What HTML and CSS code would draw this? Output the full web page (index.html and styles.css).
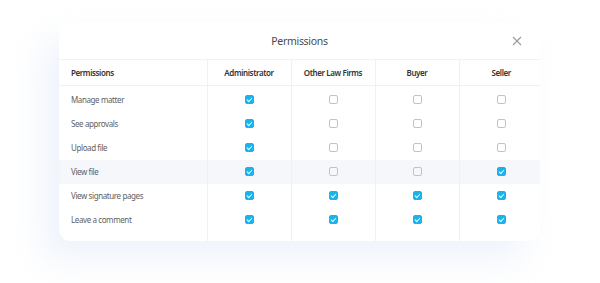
FILE: index.html
```html
<!DOCTYPE html>
<html>
<head>
<meta charset="utf-8">
<link rel="stylesheet" href="styles.css">
</head>
<body>
<div class="stage">
  <div class="card">
    <div class="titlebar">
      <span class="title">Permissions</span>
      <svg class="close" width="10" height="10" viewBox="0 0 10 10"><path d="M1 1L9 9M9 1L1 9" stroke="#9a9a9a" stroke-width="1.1" fill="none"/></svg>
    </div>
    <table class="grid">
      <colgroup><col class="c-lab"><col class="c-role"><col class="c-role"><col class="c-role"><col class="c-role"></colgroup>
      <thead>
        <tr><th class="lab">Permissions</th><th>Administrator</th><th>Other Law Firms</th><th>Buyer</th><th>Seller</th></tr>
      </thead>
      <tbody>
        <tr><td class="lab">Manage matter</td><td><i class="cb on"></i></td><td><i class="cb"></i></td><td><i class="cb"></i></td><td><i class="cb"></i></td></tr>
        <tr><td class="lab">See approvals</td><td><i class="cb on"></i></td><td><i class="cb"></i></td><td><i class="cb"></i></td><td><i class="cb"></i></td></tr>
        <tr><td class="lab">Upload file</td><td><i class="cb on"></i></td><td><i class="cb"></i></td><td><i class="cb"></i></td><td><i class="cb"></i></td></tr>
        <tr class="hl"><td class="lab">View file</td><td><i class="cb on"></i></td><td><i class="cb"></i></td><td><i class="cb"></i></td><td><i class="cb on"></i></td></tr>
        <tr><td class="lab">View signature pages</td><td><i class="cb on"></i></td><td><i class="cb on"></i></td><td><i class="cb on"></i></td><td><i class="cb on"></i></td></tr>
        <tr><td class="lab">Leave a comment</td><td><i class="cb on"></i></td><td><i class="cb on"></i></td><td><i class="cb on"></i></td><td><i class="cb on"></i></td></tr>
      </tbody>
    </table>
  </div>
</div>
</body>
</html>
```
FILE: styles.css
```css
html, body {
  margin: 0;
  padding: 0;
  background: #ffffff;
}
body {
  width: 600px;
  height: 283px;
  overflow: hidden;
  font-family: "Noto Sans", "Open Sans", sans-serif;
}
.stage {
  padding: 22px 0 0 59px;
}
.card {
  width: 481px;
  background: #ffffff;
  border-radius: 12px;
  overflow: hidden;
  box-shadow: -16px 18px 34px rgba(214, 227, 246, 0.42);
}
.titlebar {
  height: 37px;
  display: flex;
  align-items: center;
  justify-content: center;
  position: relative;
}
.title {
  font-size: 10.5px;
  letter-spacing: -0.3px;
  color: #4a4a4a;
}
.close {
  position: absolute;
  right: 18px;
  top: 14px;
}
.grid {
  border-collapse: collapse;
  table-layout: fixed;
  width: 484px;
}
.c-lab { width: 148px; }
.c-role { width: 84px; }
.grid th, .grid td {
  padding: 0;
  text-align: center;
  vertical-align: middle;
  border-left: 1px solid #f1f1f3;
  box-sizing: border-box;
  letter-spacing: -0.4px;
}
.grid th.lab, .grid td.lab {
  border-left: none;
  text-align: left;
  padding-left: 12px;
}
.grid th {
  height: 26px;
  font-size: 8px;
  font-weight: 600;
  color: #333333;
  border-top: 1px solid #f3f3f5;
  border-bottom: 1px solid #f1f1f3;
}
.grid td {
  height: 24px;
  font-size: 8px;
  color: #616161;
}
.grid tbody tr:first-child td {
  height: 26px;
  padding-top: 2px;
}
.grid tbody tr:last-child td {
  height: 33px;
  padding-bottom: 9px;
}
.grid tr.hl td {
  background: #f6f7fb;
}
.cb {
  display: block;
  margin: 0 auto;
  width: 9px;
  height: 9px;
  box-sizing: border-box;
  border: 1px solid #c3c3c5;
  border-radius: 2px;
  position: relative;
}
.cb.on {
  background: #1bb3ec;
  border-color: #1bb3ec;
}
.cb.on::after {
  content: "";
  position: absolute;
  left: 1.5px;
  top: 1.5px;
  width: 3.5px;
  height: 2px;
  border-left: 1px solid #ffffff;
  border-bottom: 1px solid #ffffff;
  transform: rotate(-45deg);
}
```
